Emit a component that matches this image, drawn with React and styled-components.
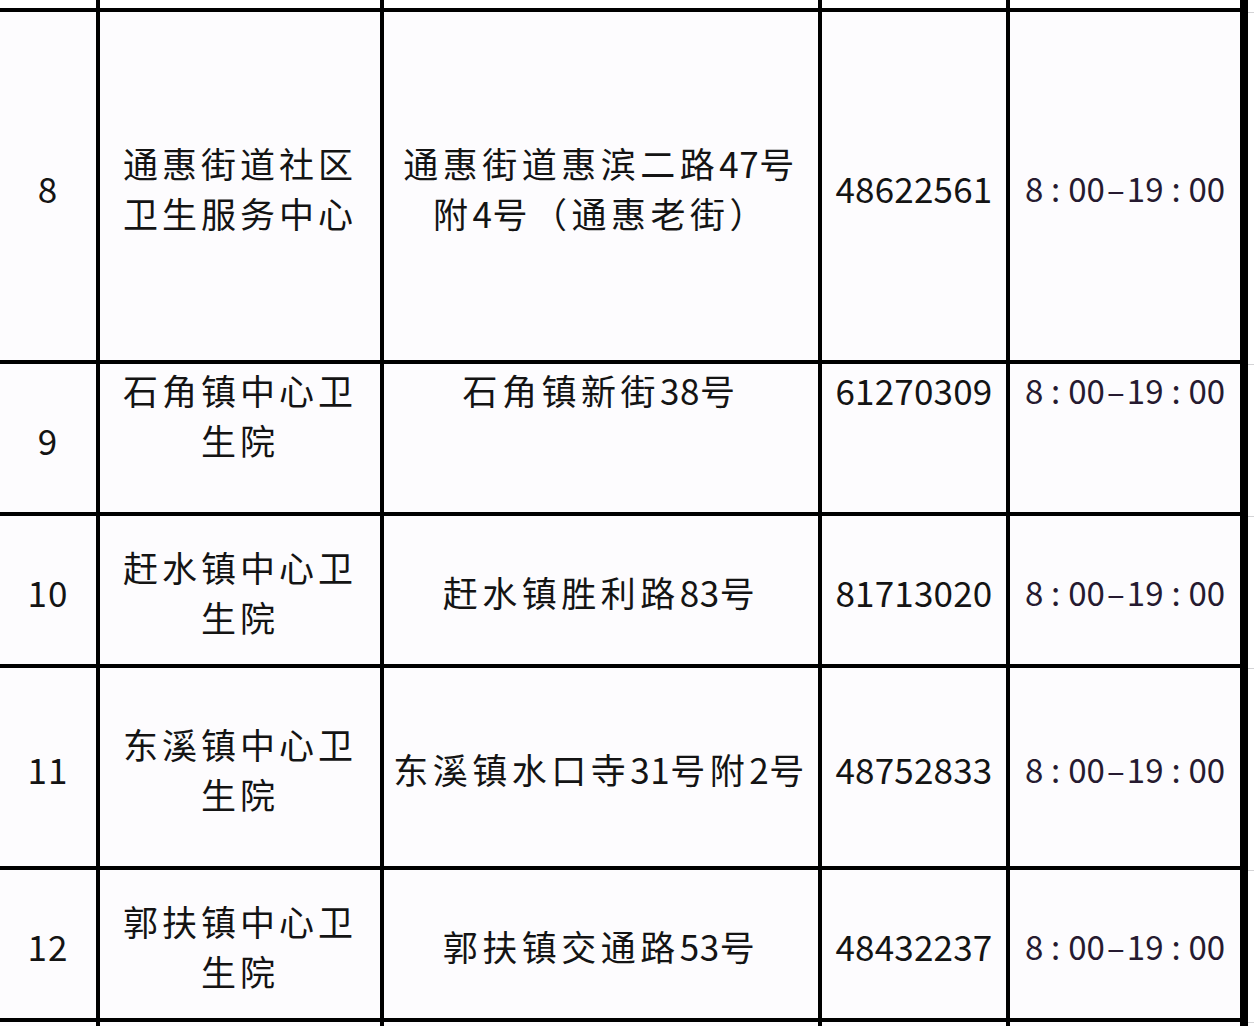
import React from "react";
import styled, { createGlobalStyle } from "styled-components";

const Global = createGlobalStyle`
  html, body { margin: 0; padding: 0; background: #ffffff; }
  body { font-family: "Noto Sans CJK SC", "Noto Sans", sans-serif; }
`;

const Page = styled.div`
  display: flex;
  width: 1254px;
  height: 1026px;
  overflow: hidden;
`;

const Sheet = styled.div`
  display: grid;
  grid-template-columns: 96px 280px 434px 184px 230px;
  grid-template-rows: 8px 348px 148px 148px 198px 148px 4px;
  gap: 4px;
  padding-right: 4px;
  background: #000000;
  width: 1244px;
  flex: none;
`;

const Strip = styled.div`
  display: grid;
  grid-template-rows: 12px 352px 152px 152px 202px 152px 4px;
  flex: 1;
  background: #ffffff;
`;

const StripCell = styled.div`
  border-bottom: ${(p) => (p.$last ? "none" : "1px solid #d4d4d6")};
  margin-bottom: -1px;
`;

const Cell = styled.div`
  background: #fdfcfe;
  color: #141414;
  font-size: 35px;
  line-height: 50px;
  display: flex;
  flex-direction: column;
  align-items: center;
  justify-content: ${(p) => (p.$top ? "flex-start" : "center")};
  text-align: center;
  white-space: nowrap;
  letter-spacing: ${(p) => p.$spacing || "4px"};
  padding-top: ${(p) => (p.$top ? "1px" : "4px")};
  box-sizing: border-box;
`;

const EdgeCell = styled.div`
  background: ${(p) => (p.$top ? "#ffffff" : "#fdfcfe")};
`;

const Line = styled.span`
  display: block;
`;

const Num = styled.span`
  letter-spacing: 0.5px;
`;

const Time = styled.span`
  display: flex;
  align-items: center;
  color: #261a30;
  font-size: 33px;
  letter-spacing: 0;
`;

const Sep = styled.span`
  display: inline-block;
  width: ${(p) => p.$w}px;
  text-align: center;
`;

const rows = [
  {
    no: "8",
    name: ["通惠街道社区", "卫生服务中心"],
    addr: ["通惠街道惠滨二路47号", "附4号（通惠老街）"],
    tel: "48622561",
  },
  {
    no: "9",
    name: ["石角镇中心卫", "生院"],
    addr: ["石角镇新街38号"],
    tel: "61270309",
    top: true,
  },
  {
    no: "10",
    name: ["赶水镇中心卫", "生院"],
    addr: ["赶水镇胜利路83号"],
    tel: "81713020",
  },
  {
    no: "11",
    name: ["东溪镇中心卫", "生院"],
    addr: ["东溪镇水口寺31号附2号"],
    tel: "48752833",
  },
  {
    no: "12",
    name: ["郭扶镇中心卫", "生院"],
    addr: ["郭扶镇交通路53号"],
    tel: "48432237",
  },
];

const Mixed = ({ text }) =>
  text.split(/(\d+)/).map((part, i) =>
    /^\d+$/.test(part) ? <Num key={i}>{part}</Num> : <React.Fragment key={i}>{part}</React.Fragment>
  );

const Hours = () => (
  <Time>
    8<Sep $w={25}>:</Sep>00<Sep $w={22}>–</Sep>19<Sep $w={25}>:</Sep>00
  </Time>
);

export default function App() {
  return (
    <>
      <Global />
      <Page>
        <Sheet>
          {[0, 1, 2, 3, 4].map((i) => (
            <EdgeCell key={`t${i}`} $top />
          ))}
          {rows.map((r) => (
            <React.Fragment key={r.no}>
              <Cell $spacing="1px">{r.no}</Cell>
              <Cell $top={r.top}>
                {r.name.map((l) => (
                  <Line key={l}>{l}</Line>
                ))}
              </Cell>
              <Cell $top={r.top} $spacing="4.5px">
                {r.addr.map((l) => (
                  <Line key={l}>
                    <Mixed text={l} />
                  </Line>
                ))}
              </Cell>
              <Cell $top={r.top} $spacing="0.2px">
                {r.tel}
              </Cell>
              <Cell $top={r.top} $spacing="0">
                <Hours />
              </Cell>
            </React.Fragment>
          ))}
          {[0, 1, 2, 3, 4].map((i) => (
            <EdgeCell key={`b${i}`} />
          ))}
        </Sheet>
        <Strip>
          {[0, 1, 2, 3, 4, 5, 6].map((i) => (
            <StripCell key={i} $last={i === 6} />
          ))}
        </Strip>
      </Page>
    </>
  );
}
